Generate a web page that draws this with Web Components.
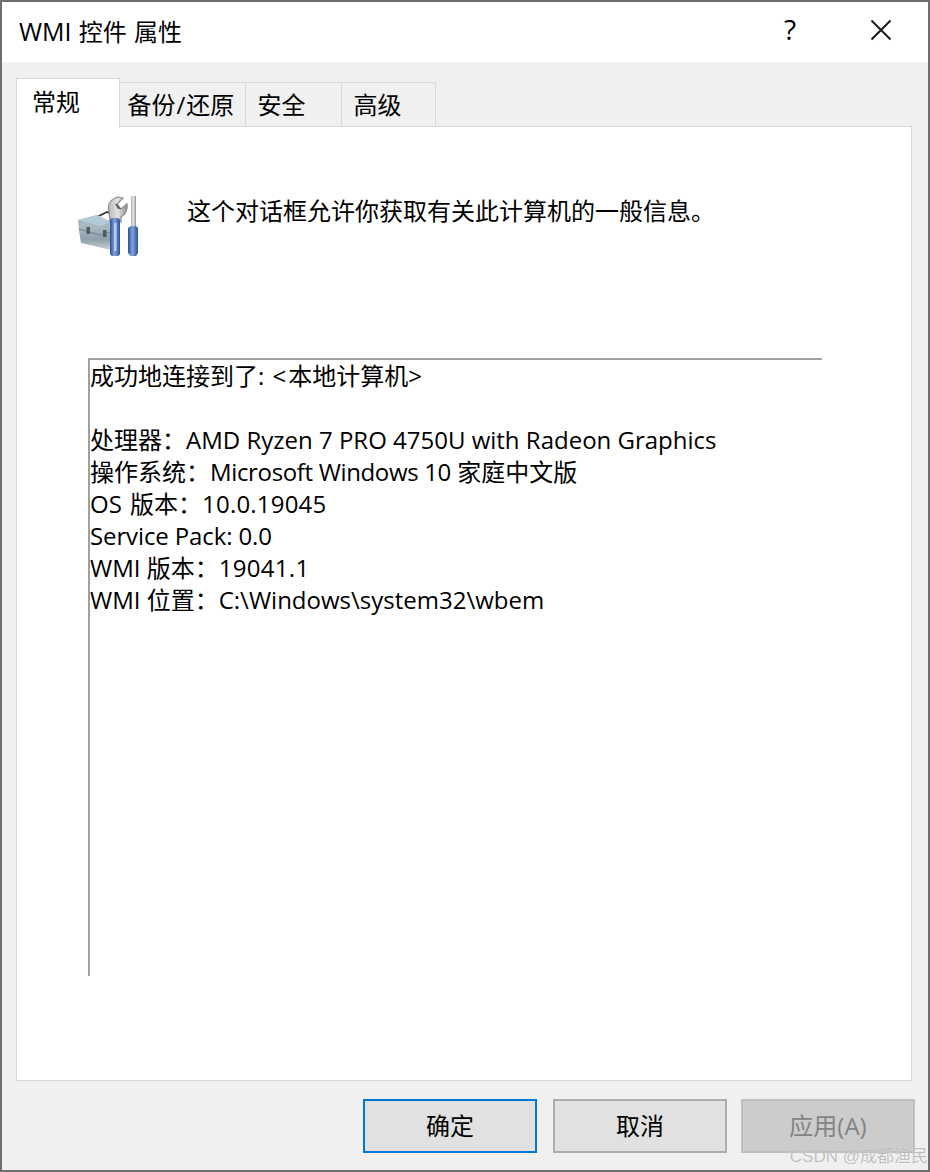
<!DOCTYPE html>
<html lang="zh">
<head>
<meta charset="utf-8">
<title>WMI 控件 属性</title>
<style>
  html, body { margin: 0; padding: 0; background: #f0f0f0; }
  body { font: 24px "Open Sans", "Noto Sans CJK SC", sans-serif; color: #000; }
</style>
</head>
<body>
<wmi-window>
  <wmi-titlebar slot="title"><span style="font-size:25px">WMI</span> 控件 属性</wmi-titlebar>
  <wmi-tabs slot="tabs">
    <wmi-tab active width="104" pad="15">常规</wmi-tab>
    <wmi-tab width="126" pad="7.5">备份<span style="letter-spacing:1px;margin-left:1px">/</span>还原</wmi-tab>
    <wmi-tab width="96" pad="11.5">安全</wmi-tab>
    <wmi-tab width="94" pad="11.5">高级</wmi-tab>
  </wmi-tabs>
  <wmi-panel slot="panel">
    <wmi-intro>这个对话框允许你获取有关此计算机的一般信息。</wmi-intro>
    <wmi-infobox>
      <div style="word-spacing:2px">成功地连接到了: <span style="letter-spacing:2px">&lt;</span>本地计算机<span style="letter-spacing:2px">&gt;</span></div>
      <div>&nbsp;</div>
      <div>处理器<wmi-colon>：</wmi-colon>AMD Ryzen 7 PRO 4750U with Radeon Graphics</div>
      <div>操作系统<wmi-colon>：</wmi-colon><span style="letter-spacing:-.35px">Microsoft Windows 10</span> 家庭中文版</div>
      <div style="word-spacing:2px">OS 版本<wmi-colon>：</wmi-colon><span style="letter-spacing:.2px">10.0.19045</span></div>
      <div style="letter-spacing:-.12px">Service Pack: 0.0</div>
      <div>WMI 版本<wmi-colon>：</wmi-colon><span style="letter-spacing:.3px">19041.1</span></div>
      <div>WMI 位置<wmi-colon>：</wmi-colon>C:\Windows\system32\wbem</div>
    </wmi-infobox>
  </wmi-panel>
  <wmi-button slot="footer" kind="default">确定</wmi-button>
  <wmi-button slot="footer" style="margin:0 14px 0 16px">取消</wmi-button>
  <wmi-button slot="footer" kind="disabled">应用(A)</wmi-button>
</wmi-window>

<script>
const FONT = '"Open Sans", "Noto Sans CJK SC", sans-serif';

class WmiWindow extends HTMLElement {
  constructor() {
    super();
    this.attachShadow({ mode: 'open' }).innerHTML = `
      <style>
        :host {
          display: flex;
          flex-direction: column;
          box-sizing: border-box;
          position: relative;
          width: 930px;
          height: 1172px;
          border: 2px solid #6e6e6e;
          background: #f0f0f0;
          font-family: ${FONT};
          overflow: hidden;
        }
        .footer {
          display: flex;
          justify-content: flex-end;
          padding: 18px 13px 0 0;
        }
        .mark {
          position: absolute;
          right: 0;
          bottom: 3px;
          font: 17px "Liberation Sans", "Noto Sans CJK SC", sans-serif;
          color: rgba(170, 170, 170, .75);
          text-shadow: 0 0 1px rgba(255,255,255,.8);
        }
      </style>
      <slot name="title"></slot>
      <slot name="tabs"></slot>
      <slot name="panel"></slot>
      <div class="footer"><slot name="footer"></slot></div>
      <div class="mark">CSDN @成都渔民</div>`;
  }
}

class WmiTitlebar extends HTMLElement {
  constructor() {
    super();
    this.attachShadow({ mode: 'open' }).innerHTML = `
      <style>
        :host {
          display: flex;
          align-items: center;
          height: 60px;
          background: #fff;
          font-size: 24px;
          color: #000;
        }
        .text { flex: 1; padding: 0 0 4px 17px; word-spacing: 1px; }
        .help { width: 24px; margin-right: 68px; text-align: center; font: 28px "Open Sans", sans-serif; position: relative; top: -3px; }
        svg { display: block; margin: 0 36px 4px 0; }
      </style>
      <div class="text"><slot></slot></div>
      <div class="help">?</div>
      <svg width="22" height="22" viewBox="0 0 22 22" fill="none" stroke="#1a1a1a" stroke-width="2"><path d="M1.500 1.500 20.500 20.500M20.500 1.500 1.500 20.500"/></svg>`;
  }
}

class WmiTabs extends HTMLElement {
  constructor() {
    super();
    this.attachShadow({ mode: 'open' }).innerHTML = `
      <style>
        :host {
          display: flex;
          align-items: flex-end;
          height: 64px;
          padding-left: 14px;
          position: relative;
          z-index: 1;
        }
      </style>
      <slot></slot>`;
  }
}

class WmiTab extends HTMLElement {
  constructor() {
    super();
    const w = this.getAttribute('width');
    const pad = this.getAttribute('pad') || 16;
    this.attachShadow({ mode: 'open' }).innerHTML = `
      <style>
        :host {
          display: block;
          box-sizing: border-box;
          width: ${w}px;
          height: 44px;
          padding-left: ${pad}px;
          border: 1px solid #d9d9d9;
          border-left-width: 0;
          border-bottom: 0;
          background: #f0f0f0;
          font-size: 24px;
          line-height: 44px;
          white-space: nowrap;
        }
        :host([active]) {
          height: 50px;
          margin-bottom: -2px;
          border-left-width: 1px;
          background: #fff;
          line-height: 46px;
        }
      </style>
      <slot></slot>`;
  }
}

class WmiPanel extends HTMLElement {
  constructor() {
    super();
    this.attachShadow({ mode: 'open' }).innerHTML = `
      <style>
        :host {
          display: block;
          box-sizing: border-box;
          height: 955px;
          margin: 0 16px 0 14px;
          padding: 0 0 0 61px;
          border: 1px solid #d9d9d9;
          background: #fff;
        }
      </style>
      <slot></slot>`;
  }
}

class WmiIntro extends HTMLElement {
  constructor() {
    super();
    this.attachShadow({ mode: 'open' }).innerHTML = `
      <style>
        :host {
          display: flex;
          align-items: flex-start;
          height: 231px;
          font-size: 24px;
        }
        svg { display: block; margin-top: 68px; flex: none; filter: blur(.45px); }
        .text { margin-left: 45px; margin-top: 67px; line-height: 34px; white-space: nowrap; }
      </style>
      <svg width="64" height="62" viewBox="0 0 64 62">
        <defs>
          <linearGradient id="box" x1="0" y1="0" x2="0" y2="1">
            <stop offset="0" stop-color="#9fb6c4"/>
            <stop offset=".35" stop-color="#a7b8c1"/>
            <stop offset=".7" stop-color="#8ea0a9"/>
            <stop offset="1" stop-color="#c9d3d6"/>
          </linearGradient>
          <linearGradient id="blue" x1="0" y1="0" x2="1" y2="0">
            <stop offset="0" stop-color="#2c4f96"/>
            <stop offset=".45" stop-color="#7ea4d8"/>
            <stop offset="1" stop-color="#2c5199"/>
          </linearGradient>
          <linearGradient id="steel" x1="0" y1="0" x2="1" y2="0">
            <stop offset="0" stop-color="#b8b8b8"/>
            <stop offset=".5" stop-color="#e4e4e4"/>
            <stop offset="1" stop-color="#8f8f8f"/>
          </linearGradient>
        </defs>
        <path d="M15 24 29 17 34 19" fill="none" stroke="#2f3336" stroke-width="1.800"/>
        <path d="M0 25 19 20 33 27 33 55 3 48 1 36Z" fill="url(#box)"/>
        <path d="M0 25 19 20 33 27 22 31Z" fill="#b4cad6"/>
        <path d="M1 34 22 40 33 37" fill="none" stroke="#75868f" stroke-width="1.200"/>
        <rect x="8.500" y="32" width="3.500" height="7" fill="#4e5b63"/>
        <rect x="25" y="35" width="3.500" height="7" fill="#4e5b63"/>
        <path d="M31 16C29 9 33 4 40 2L45 3 39 9 43 14 49 9C50 15 47 20 43 22L43 27 32 27Z" fill="url(#steel)" stroke="#8a8a8a" stroke-width="1.200"/>
        <path d="M37 9 40 14 43 14 39 9Z" fill="#5e5e5e"/>
        <rect x="32" y="23" width="10" height="38" rx="3" fill="url(#blue)"/>
        <rect x="36" y="28" width="2.500" height="28" fill="#b4cdee"/>
        <rect x="53" y="1" width="5" height="32" fill="url(#steel)"/>
        <path d="M50 33 53 31 58 31 60 33 60 58 58 61 53 61 50 58Z" fill="url(#blue)"/>
      </svg>
      <div class="text"><slot></slot></div>`;
  }
}

class WmiInfobox extends HTMLElement {
  constructor() {
    super();
    this.attachShadow({ mode: 'open' }).innerHTML = `
      <style>
        :host {
          display: block;
          box-sizing: border-box;
          width: 734px;
          height: 618px;
          margin-left: 10px;
          border-top: 2px solid #a0a0a0;
          border-left: 2px solid #a0a0a0;
          font-size: 24px;
          line-height: 32px;
          white-space: nowrap;
        }
      </style>
      <slot></slot>`;
  }
}

// fullwidth colon sits in the middle of its cell, as in the TC face
// no whitespace in this shadow root, the host is inline and it would render
class WmiColon extends HTMLElement {
  constructor() {
    super();
    this.attachShadow({ mode: 'open' }).innerHTML =
      `<style>:host { display: inline; line-height: 0; font-family: "Noto Sans CJK TC", sans-serif; }</style><slot></slot>`;
  }
}

class WmiButton extends HTMLElement {
  constructor() {
    super();
    this.attachShadow({ mode: 'open' }).innerHTML = `
      <style>
        :host {
          display: flex;
          align-items: center;
          justify-content: center;
          box-sizing: border-box;
          width: 174px;
          height: 54px;
          padding-bottom: 3px;
          border: 2px solid #adadad;
          background: #e1e1e1;
          font-size: 24px;
        }
        :host([kind="default"]) { border-color: #0078d7; }
        :host([kind="disabled"]) { border-color: #bfbfbf; background: #cccccc; color: #838383; }
      </style>
      <slot></slot>`;
  }
}

customElements.define('wmi-window', WmiWindow);
customElements.define('wmi-titlebar', WmiTitlebar);
customElements.define('wmi-tabs', WmiTabs);
customElements.define('wmi-tab', WmiTab);
customElements.define('wmi-panel', WmiPanel);
customElements.define('wmi-intro', WmiIntro);
customElements.define('wmi-infobox', WmiInfobox);
customElements.define('wmi-colon', WmiColon);
customElements.define('wmi-button', WmiButton);
</script>
</body>
</html>
